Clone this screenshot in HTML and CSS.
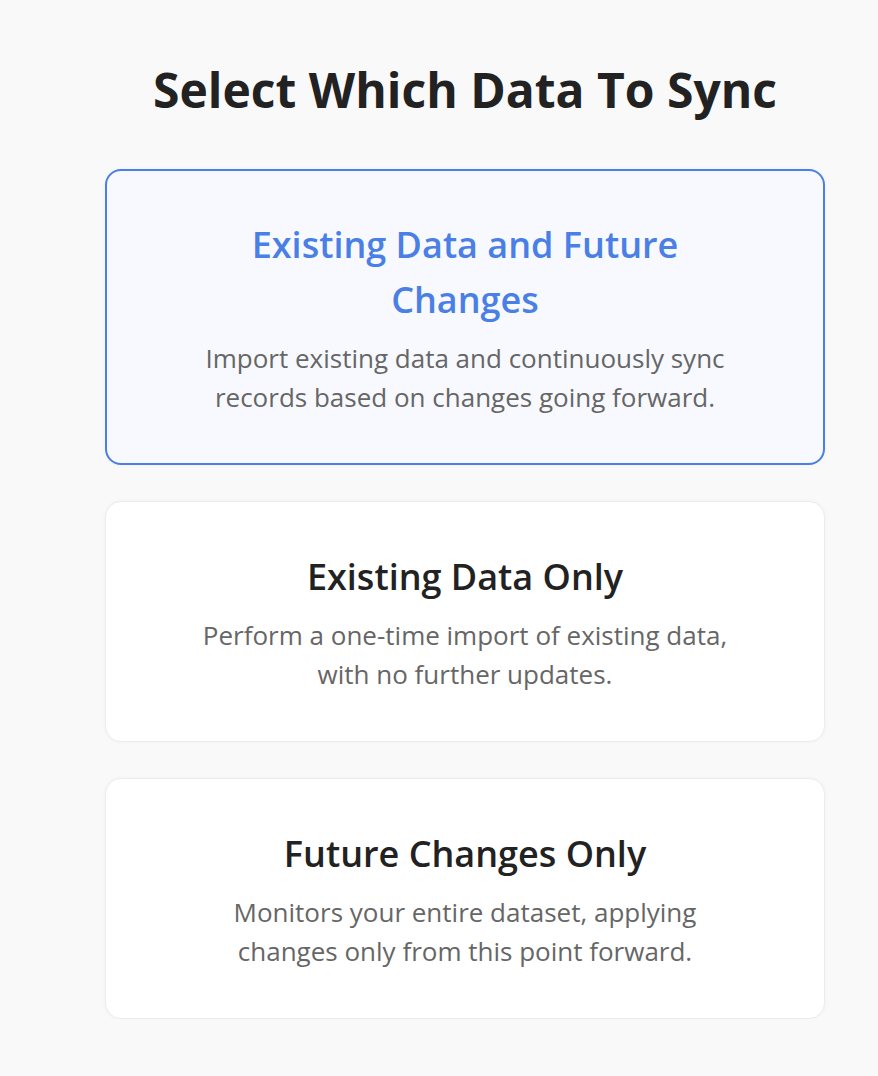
FILE: index.html
```html
<!DOCTYPE html>
<html>
<head>
    <title>Select Which Data To Sync</title>
    <link rel="stylesheet" href="styles.css">
</head>
<body>
    <div id="page">
        <div class="syncPicker">
            <h1>Select Which Data To Sync</h1>
            <div class="option selected">
                <h2>Existing Data and Future Changes</h2>
                <p>Import existing data and continuously sync records based on changes going forward.</p>
            </div>
            <div class="option">
                <h2>Existing Data Only</h2>
                <p>Perform a one-time import of existing data, with no further updates.</p>
            </div>
            <div class="option">
                <h2>Future Changes Only</h2>
                <p>Monitors your entire dataset, applying changes only from this point forward.</p>
            </div>
        </div>
    </div>
</body>
</html>
```

FILE: styles.css
```css
body {
    margin: 0;
    background-color: #f9f9f9;
    font-family: "Open Sans", "Noto Sans", sans-serif;
    color: #222;
}
#page {
    display: flex;
    justify-content: center;
    padding-left: 52px;
}
.syncPicker {
    width: 720px;
    display: flex;
    flex-direction: column;
    gap: 36px;
}
h1 {
    margin: 58px 0 11px;
    font-size: 48px;
    font-weight: 700;
    line-height: 64px;
    text-align: center;
}
.option {
    box-sizing: border-box;
    padding: 47px 89px;
    background-color: #fff;
    border: 1px solid #ececec;
    border-radius: 16px;
    box-shadow: 0 0 4px rgba(0, 0, 0, 0.04);
    text-align: center;
}
.option.selected {
    padding: 46px 88px;
    background-color: #f7f9fe;
    border: 2px solid #4a7fe5;
}
.option h2 {
    margin: 0 0 12px;
    font-size: 36px;
    font-weight: 600;
    line-height: 55px;
}
.option.selected h2 {
    color: #4a7fe5;
}
.option p {
    margin: 0;
    font-size: 26px;
    line-height: 39px;
    color: #666;
}
```
